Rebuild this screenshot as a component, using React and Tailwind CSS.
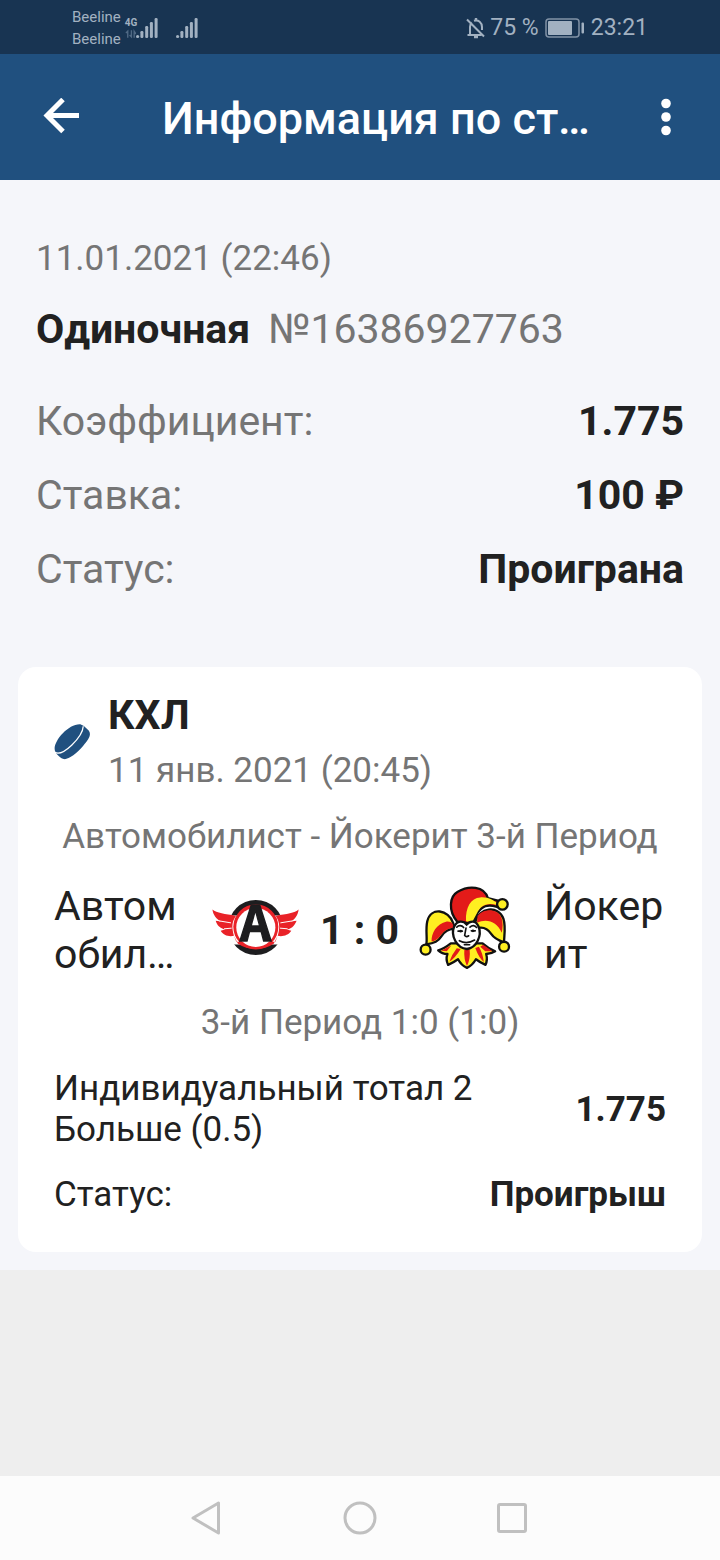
function Signal() {
  return (
    <svg viewBox="0 0 22 22" className="h-[22px] w-[22px]" fill="#a2b1c1">
      <circle cx="1.6" cy="19.5" r="1.6" />
      <rect x="4.4" y="14" width="3" height="7" rx="1.2" />
      <rect x="9.2" y="9" width="3" height="12" rx="1.2" />
      <rect x="13.9" y="5" width="3" height="16" rx="1.2" />
      <rect x="18.6" y="1" width="3" height="20" rx="1.2" />
    </svg>
  );
}

function StatusBar() {
  return (
    <div className="flex h-[54px] items-center justify-between bg-[#183452] px-[72px] text-[#a2b1c1]">
      <div className="flex items-center pt-px">
        <div className="text-[15px] leading-[22px]">
          <div>Beeline</div>
          <div>Beeline</div>
        </div>
        <div className="ml-1 flex w-[11px] flex-col text-[10px] leading-3 font-bold">
          <span>4G</span>
          <svg viewBox="0 0 12 10" className="h-[10px] w-[11px]" fill="none" stroke="#506984" strokeWidth="1.500">
            <path d="M1 4l2-2v7M7 1v7L5 6M10 9V2l2 3" />
          </svg>
        </div>
        <Signal />
        <div className="w-[18px]" />
        <Signal />
      </div>
      <div className="flex items-center pt-px text-[23px] leading-7">
        <svg viewBox="0 0 20 22" className="mr-1 h-[22px] w-5" fill="none" stroke="#a2b1c1" strokeWidth="2">
          <path d="M4 17V10c0-2 .6-3.500 1.800-4.600M8 3.800C12.500 2.300 16 5.500 16 10v3M1.500 18h14M1 2.500l17 17" />
          <path d="M10 1v2M8 20h4" strokeWidth="2.400" />
        </svg>
        <span>75 %</span>
        <svg viewBox="0 0 40 20" className="mx-[6px] h-5 w-10" fill="none">
          <rect x="1" y="1" width="33" height="18" rx="3" stroke="#8192a6" strokeWidth="1.500" />
          <rect x="3" y="3" width="24" height="14" rx="1" fill="#a2b1c1" />
          <rect x="36.500" y="4.500" width="2.500" height="11" rx="1" fill="#a2b1c1" />
        </svg>
        <span>23:21</span>
      </div>
    </div>
  );
}

function AvtomobilistLogo() {
  return (
    <svg viewBox="36 52 268 178" className="h-[59px] w-[89px] overflow-visible" role="img" aria-label="Автомобилист">
      <circle cx="171" cy="141" r="83" fill="#1d1d1f" />
      <path d="M86 105H256L268 142 252 192H90L74 142z" fill="#fff" />
      <path d="M40 87C53 98 78 100 111 106C99 122 97 139 105 166L112 184H230L237 166C245 139 242 122 231 106C264 100 289 98 300 87C298 105 289 116 277 123L294 121C287 139 276 146 264 147L278 151C269 166 250 169 237 166L225 190C195 211 147 211 117 190L105 166C91 170 72 165 65 151L78 147C64 144 54 136 50 121L66 123C51 116 42 102 40 87z" fill="#e92228" />
      <circle cx="171" cy="139" r="68" fill="#e92228" />
      <circle cx="171" cy="141" r="59" fill="#fff" />
      <path d="M60 121L96 127M75 145L98 143M282 121L245 127M267 145L244 143" stroke="#fff" strokeWidth="3" />
      <text x="170" y="182" textAnchor="middle" className="font-['Noto_Sans_CJK_JP','Roboto',sans-serif] text-[146px] leading-none font-bold" fill="#1d1d1f" stroke="#1d1d1f" strokeWidth="4">
        A
      </text>
    </svg>
  );
}

function JokeritLogo() {
  return (
    <svg viewBox="20 14 278 256" className="h-[85px] w-[92px]" role="img" aria-label="Йокерит">
      <g stroke="#111" strokeWidth="7" strokeLinejoin="round">
        <path d="M116 190Q96 206 78 211Q90 222 106 222Q100 239 108 255Q124 248 138 238Q148 257 165 264Q181 257 192 238Q205 248 221 255Q228 239 223 222Q238 222 250 214Q230 206 212 190z" fill="#ffef21" />
        <path d="M123 128C109 88 56 78 45 123C39 150 46 176 42 193C67 190 78 184 88 168C99 151 109 145 127 146z" fill="#ffef21" />
        <path d="M190 125C201 82 259 73 275 115C283 139 277 167 277 187C261 181 246 173 238 161C226 143 213 139 195 144z" fill="#ffef21" />
        <path d="M135 124C108 91 112 48 137 34C170 14 217 16 228 53L258 61 256 80C226 70 211 78 197 98L181 130z" fill="#e31b19" />
      </g>
      <path d="M58 184C57 160 72 131 104 124Q116 123 121 130L126 143C103 145 94 155 83 169C75 179 67 183 58 184z" fill="#e31b19" />
      <path d="M197 107C214 84 256 82 269 112C275 129 273 144 270 158C256 124 224 113 195 128z" fill="#e31b19" />
      <path d="M162 123C160 81 177 52 205 51C231 49 246 62 256 67V74C222 65 206 77 195 99L180 127z" fill="#ffef21" />
      <path d="M118 196L87 212 104 214zM134 205Q118 226 112 245Q128 236 146 207zM157 209Q155 238 165 258Q176 238 173 207zM190 204Q202 236 216 246Q212 218 201 200zM214 194L242 214 220 214 205 200z" fill="#e31b19" />
      <path d="M126 140C115 165 133 205 165 207C194 203 211 167 200 139C191 118 173 122 164 133C154 121 135 120 126 140z" fill="#fff" stroke="#111" strokeWidth="7" />
      <path d="M134 141C140 134 149 135 155 142M174 141C181 134 189 135 194 142M138 153H151M178 152H190M162 144L158 166Q163 172 170 167M142 182C157 190 173 189 188 180M157 194H173" fill="none" stroke="#111" strokeWidth="5" strokeLinecap="round" />
      <circle cx="146" cy="153" r="4" fill="#111" />
      <circle cx="183" cy="152" r="4" fill="#111" />
      <g fill="#ffef21" stroke="#111" strokeWidth="7">
        <circle cx="40" cy="209" r="15" />
        <circle cx="272" cy="72" r="16" />
        <circle cx="277" cy="200" r="15" />
      </g>
    </svg>
  );
}

const summary = [
  ["Коэффициент:", "1.775"],
  ["Ставка:", "100 ₽"],
  ["Статус:", "Проиграна"],
];

export default function App() {
  return (
    <div className="flex min-h-screen flex-col bg-[#eeeeee] font-['Roboto',sans-serif] text-[#212121]">
      <StatusBar />
      <header className="flex h-[126px] items-center bg-[#20507f] px-9 text-white">
        <button aria-label="Назад" className="flex h-[50px] w-[50px] items-center justify-center">
          <svg viewBox="0 0 38 38" className="h-[38px] w-[38px]" fill="none" stroke="#fff" strokeWidth="5">
            <path d="M37 17.500H5M21 1.500L5 17.500L21 33.500" />
          </svg>
        </button>
        <h1 className="ml-[76px] min-w-0 flex-1 truncate pt-1 text-[45px] leading-[54px] font-medium">Информация по ставке</h1>
        <button aria-label="Меню" className="ml-11 flex h-[50px] w-9 items-center justify-center">
          <svg viewBox="0 0 10 38" className="h-[38px] w-[10px]" fill="#fff">
            <circle cx="5" cy="5.500" r="4.800" />
            <circle cx="5" cy="19" r="4.800" />
            <circle cx="5" cy="32.500" r="4.800" />
          </svg>
        </button>
      </header>

      <main className="bg-[#f5f6fa] px-[18px] pt-14 pb-[18px]">
        <section className="px-[18px]">
          <p className="text-[35px] leading-[46px] text-[#757575]">11.01.2021 (22:46)</p>
          <p className="mt-5 flex gap-[18px] text-[41px] leading-[54px]">
            <b className="font-bold">Одиночная</b>
            <span className="text-[#757575]">№16386927763</span>
          </p>
          <dl className="mt-7 text-[41px] leading-[74px]">
            {summary.map(([label, value]) => (
              <div key={label} className="flex justify-between">
                <dt className="text-[#757575]">{label}</dt>
                <dd className="font-bold">{value}</dd>
              </div>
            ))}
          </dl>
        </section>

        <article className="mt-[61px] rounded-[18px] bg-white px-9 pt-[23px] pb-[34px]">
          <div className="flex items-center gap-[18px]">
            <svg viewBox="40 100 112 112" className="h-9 w-9">
              <path d="M42 178C41 150 86 99 122 101L133 106L148 120C158 134 147 149 131 168C110 193 84 212 70 209C60 207 56 201 47 192Q42 186 42 178z" fill="#20507f" />
              <path d="M43 188C66 203 129 141 131 107" fill="none" stroke="#fff" strokeWidth="4" />
            </svg>
            <div>
              <h2 className="text-[41px] leading-[50px] font-bold">КХЛ</h2>
              <p className="mt-2 text-[35px] leading-[46px] text-[#757575]">11 янв. 2021 (20:45)</p>
            </div>
          </div>
          <p className="mt-5 text-center text-[35px] leading-[46px] whitespace-nowrap text-[#757575]">Автомобилист - Йокерит 3-й Период</p>
          <div className="mt-[22px] flex items-start justify-between text-[41px] leading-12">
            <p className="line-clamp-2 w-[124px] break-all">Автомобилист</p>
            <div className="flex h-[91px] items-center gap-5">
              <AvtomobilistLogo />
              <b className="pt-1 text-[41px] font-bold whitespace-nowrap">1 : 0</b>
              <JokeritLogo />
            </div>
            <p className="line-clamp-2 w-[122px] break-all">Йокерит</p>
          </div>
          <p className="mt-[22px] text-center text-[35px] leading-[46px] text-[#757575]">3-й Период 1:0 (1:0)</p>
          <div className="mt-[22px] flex items-center justify-between text-[35px] leading-[41px]">
            <p className="w-[440px]">Индивидуальный тотал 2 Больше (0.5)</p>
            <b className="font-bold">1.775</b>
          </div>
          <div className="mt-[22px] flex justify-between text-[35px] leading-[46px]">
            <span>Статус:</span>
            <b className="font-bold">Проигрыш</b>
          </div>
        </article>
      </main>

      <nav className="mt-auto flex h-[84px] items-center justify-center gap-[116px] bg-[#fcfcfc]">
        <button aria-label="Назад">
          <svg viewBox="0 0 36 36" className="h-9 w-9" fill="none" stroke="#c0c0c0" strokeWidth="3" strokeLinejoin="round">
            <path d="M28.500 3V33L3 18z" />
          </svg>
        </button>
        <button aria-label="Домой">
          <svg viewBox="0 0 36 36" className="h-9 w-9" fill="none" stroke="#c0c0c0" strokeWidth="3">
            <circle cx="18" cy="18" r="15" />
          </svg>
        </button>
        <button aria-label="Недавние">
          <svg viewBox="0 0 36 36" className="h-9 w-9" fill="none" stroke="#c0c0c0" strokeWidth="3">
            <rect x="4.500" y="4.500" width="27" height="27" rx="1.500" />
          </svg>
        </button>
      </nav>
    </div>
  );
}
